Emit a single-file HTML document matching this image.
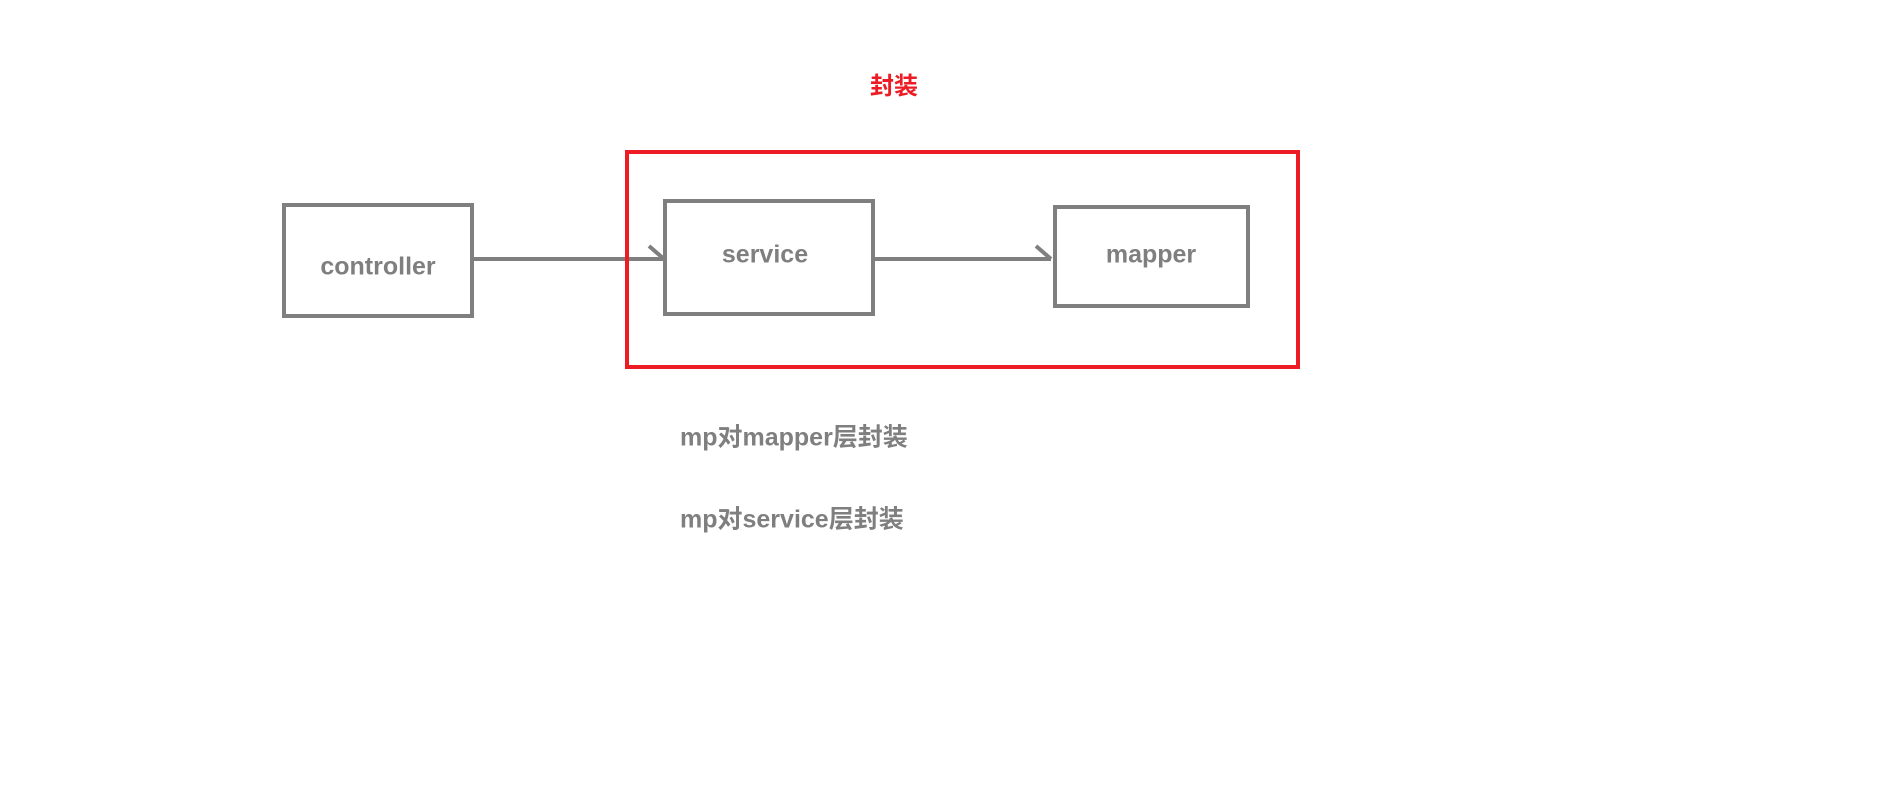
<!DOCTYPE html>
<html><head><meta charset="utf-8"><style>
body{margin:0;width:1904px;height:785px;background:#fff;position:relative;overflow:hidden;font-family:"Liberation Sans","Noto Sans CJK SC",sans-serif;font-weight:bold}
.t{position:absolute;white-space:nowrap;color:#7f7f7f;font-size:25px;line-height:1;transform:translate(-50%,-50%)}
.l{position:absolute;white-space:nowrap;color:#7f7f7f;font-size:25px;line-height:1;transform:translateY(-50%)}
</style></head><body>
<svg width="1904" height="785" style="position:absolute;left:0;top:0">
<g fill="none" stroke="#7f7f7f" stroke-width="4">
<rect x="284" y="205" width="188" height="111"/>
<rect x="665" y="201" width="208" height="113"/>
<rect x="1055" y="207" width="193" height="99"/>
<path d="M472 259H664M649 246L664 259"/>
<path d="M875 259H1051M1036 246L1051 259"/>
</g>
<rect x="627" y="152" width="671" height="215" fill="none" stroke="#ed1c24" stroke-width="4"/>
</svg>
<div class="t" style="left:894px;top:87px;color:#ed1c24;font-size:24px">封装</div>
<div class="t" style="left:378px;top:267px">controller</div>
<div class="t" style="left:765px;top:255px">service</div>
<div class="t" style="left:1151px;top:255px">mapper</div>
<div class="l" style="left:680px;top:438px">mp对mapper层封装</div>
<div class="l" style="left:680px;top:520px">mp对service层封装</div>
</body></html>
